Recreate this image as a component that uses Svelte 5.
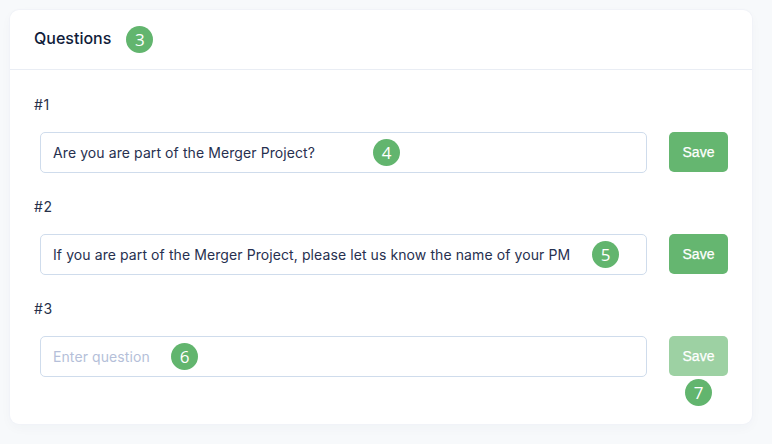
<script lang="ts">
	const questions = [
		{ id: 1, text: 'Are you are part of the Merger Project?', badge: 4, badgeX: 346 },
		{ id: 2, text: 'If you are part of the Merger Project, please let us know the name of your PM', badge: 5, badgeX: 565 },
		{ id: 3, text: '', badge: 6, badgeX: 144 }
	];
</script>

<div class="page">
	<section class="card">
		<header class="head">
			<h2>Questions</h2>
			<span class="badge">3</span>
		</header>
		<div class="body">
			{#each questions as q}
				<div class="item">
					<div class="label">#{q.id}</div>
					<div class="row">
						<div class="field">
							<input type="text" value={q.text} placeholder="Enter question" />
							<span class="badge over" style="left: {q.badgeX - 13}px">{q.badge}</span>
						</div>
						<div class="action">
							<button class:disabled={!q.text}>Save</button>
							{#if !q.text}
								<span class="badge under">7</span>
							{/if}
						</div>
					</div>
				</div>
			{/each}
		</div>
	</section>
</div>

<style>
	:global(body) {
		margin: 0;
		background: #f7f9fb;
	}

	.page {
		height: 444px;
		box-sizing: border-box;
		padding: 10px 20px 20px 10px;
		font-family: Inter, 'Liberation Sans', sans-serif;
		overflow: hidden;
	}

	.card {
		height: 414px;
		background: #fff;
		border-radius: 9px;
		box-shadow:
			0 0 0 1px #f1f3f8,
			0 4px 12px rgba(40, 60, 110, 0.03);
	}

	.head {
		height: 60px;
		box-sizing: border-box;
		display: flex;
		align-items: center;
		gap: 15px;
		padding: 0 24px;
		border-bottom: 1px solid #e9edf4;
	}

	h2 {
		margin: 0 0 3px;
		font-size: 16px;
		font-weight: 500;
		color: #101c3a;
	}

	.body {
		padding: 25px 24px 0;
	}

	.item {
		height: 102px;
	}

	.label {
		height: 20px;
		line-height: 20px;
		font-size: 14px;
		letter-spacing: 0.6px;
		color: #27304a;
	}

	.row {
		display: flex;
		gap: 22px;
		margin: 17px 0 0 6px;
	}

	.field {
		position: relative;
		flex: 0 0 607px;
	}

	input {
		display: block;
		width: 100%;
		height: 41px;
		box-sizing: border-box;
		padding: 0 12px;
		border: 1px solid #cfdcec;
		border-radius: 5px;
		outline: none;
		font: 400 14px Inter, 'Liberation Sans', sans-serif;
		letter-spacing: 0.09px;
		color: #27304f;
		background: #fff;
	}

	input::placeholder {
		color: #b5bfd9;
		opacity: 1;
	}

	.action {
		position: relative;
	}

	button {
		display: block;
		width: 59px;
		height: 40px;
		padding: 0;
		border: none;
		border-radius: 5px;
		background: #65b670;
		color: #fff;
		font: 400 14px 'Liberation Sans', Arial, sans-serif;
		-webkit-text-stroke: 0.25px #fff;
	}

	button.disabled {
		background: #9dd1a3;
	}

	.badge {
		display: inline-flex;
		align-items: center;
		justify-content: center;
		width: 27px;
		height: 27px;
		border-radius: 50%;
		background: #62b56e;
		color: #fff;
		font: 500 17px 'Open Sans', sans-serif;
		flex: none;
	}

	.over {
		position: absolute;
		top: 7px;
	}

	.under {
		position: absolute;
		top: 43px;
		left: 16px;
	}
</style>
